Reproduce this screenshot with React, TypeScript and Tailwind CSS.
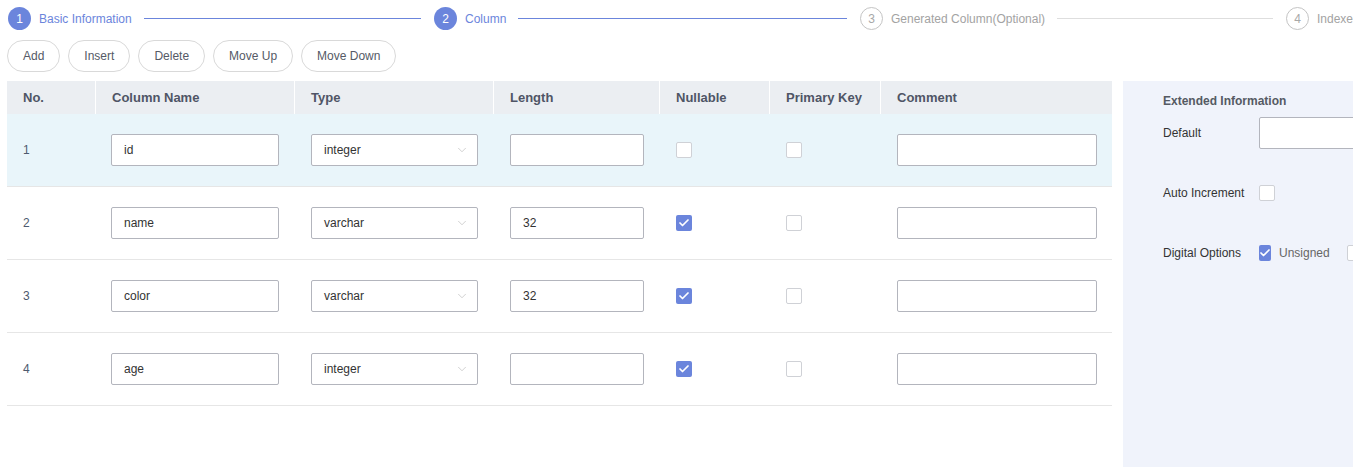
import { Check, ChevronDown } from 'lucide-react';

const steps = [
  { n: 1, label: 'Basic Information', done: true },
  { n: 2, label: 'Column', done: true },
  { n: 3, label: 'Generated Column(Optional)', done: false },
  { n: 4, label: 'Indexes', done: false },
];

const cols = [
  { name: 'No.', w: 'w-[88px]' },
  { name: 'Column Name', w: 'w-[199px]' },
  { name: 'Type', w: 'w-[199px]' },
  { name: 'Length', w: 'w-[166px]' },
  { name: 'Nullable', w: 'w-[110px]' },
  { name: 'Primary Key', w: 'w-[111px]' },
  { name: 'Comment', w: 'w-[232px]' },
];

const rows = [
  { no: 1, name: 'id', type: 'integer', length: '', nullable: false },
  { no: 2, name: 'name', type: 'varchar', length: '32', nullable: true },
  { no: 3, name: 'color', type: 'varchar', length: '32', nullable: true },
  { no: 4, name: 'age', type: 'integer', length: '', nullable: true },
];

function Box({ checked }: { checked: boolean }) {
  return checked ? (
    <div className="w-4 h-4 rounded-[2px] bg-[#6b85dc] flex items-center justify-center">
      <Check size={12} strokeWidth={3.5} className="text-white" />
    </div>
  ) : (
    <div className="w-4 h-4 rounded-[2px] border border-[#cfd1d6] bg-white" />
  );
}

function TextBox({ value, w }: { value: string; w: string }) {
  return (
    <div className={`${w} h-8 border border-[#b3b5bd] rounded-[2px] bg-white px-3 flex items-center text-[12px] text-[#333]`}>
      {value}
    </div>
  );
}

export default function App() {
  return (
    <div className="w-[1353px] h-[467px] overflow-hidden bg-white flex flex-col" style={{ fontFamily: '"Liberation Sans", Arial, sans-serif' }}>
      {/* steps */}
      <div className="h-[37px] flex items-center pl-2 shrink-0">
        {steps.map(s => (
          <div key={s.n} className="w-[426px] shrink-0 flex items-center">
            <div className={`w-[23px] h-[23px] rounded-full flex items-center justify-center text-[12px] shrink-0 ${s.done ? 'bg-[#6b85dc] text-white' : 'border border-[#c4c4c4] text-[#a8a8a8]'}`}>
              {s.n}
            </div>
            <span className={`ml-2 text-[12px] whitespace-nowrap ${s.done ? 'text-[#6b85dc]' : 'text-[#a3a3a3]'}`}>{s.label}</span>
            {s.n < 4 && <div className={`flex-1 h-px ml-3 mr-[13px] ${s.done ? 'bg-[#6b85dc]' : 'bg-[#dedede]'}`} />}
          </div>
        ))}
      </div>

      {/* toolbar */}
      <div className="flex gap-2 pl-[7px] h-8 shrink-0 mt-[3px]">
        {['Add', 'Insert', 'Delete', 'Move Up', 'Move Down'].map(b => (
          <button key={b} className="h-8 px-[15px] rounded-full border border-[#d9d9d9] bg-white text-[12px] text-[#555a66]">
            {b}
          </button>
        ))}
      </div>

      <div className="flex flex-1 mt-[9px] min-h-0">
        {/* table */}
        <div className="ml-[7px] w-[1105px] shrink-0">
          <div className="flex h-[33px] bg-[#ebeef2]">
            {cols.map((c, i) => (
              <div key={c.name} className={`${c.w} shrink-0 pl-4 flex items-center text-[13px] font-bold text-[#4f5566] ${i > 0 ? 'border-l border-white' : ''}`}>
                {c.name}
              </div>
            ))}
          </div>
          {rows.map(r => (
            <div key={r.no} className={`flex h-[73px] border-b border-[#e6e6e6] items-center ${r.no === 1 ? 'bg-[#e9f5fa]' : 'bg-white'}`}>
              <div className="w-[88px] shrink-0 pl-4 text-[12px] text-[#4d5a6e]">{r.no}</div>
              <div className="w-[199px] shrink-0 pl-4">
                <TextBox value={r.name} w="w-[168px]" />
              </div>
              <div className="w-[199px] shrink-0 pl-[17px]">
                <div className="w-[167px] h-8 border border-[#b3b5bd] rounded-[2px] bg-white pl-3 pr-2 flex items-center justify-between text-[12px] text-[#333]">
                  {r.type}
                  <ChevronDown size={14} strokeWidth={1} className="text-[#b0b0b0]" />
                </div>
              </div>
              <div className="w-[166px] shrink-0 pl-[17px]">
                <TextBox value={r.length} w="w-[134px]" />
              </div>
              <div className="w-[110px] shrink-0 pl-[17px]">
                <Box checked={r.nullable} />
              </div>
              <div className="w-[111px] shrink-0 pl-[17px]">
                <Box checked={false} />
              </div>
              <div className="w-[232px] shrink-0 pl-[17px]">
                <TextBox value="" w="w-[200px]" />
              </div>
            </div>
          ))}
        </div>

        {/* extended info */}
        <div className="ml-[11px] flex-1 bg-[#f0f3fb] pl-10 pt-3 overflow-hidden">
          <div className="text-[12px] font-bold text-[#555a63] h-[16px] leading-[16px]">Extended Information</div>
          <div className="flex items-center h-8 mt-[8px]">
            <span className="w-24 shrink-0 text-[12px] text-[#333]">Default</span>
            <div className="w-[200px] h-8 shrink-0 border border-[#b3b5bd] rounded-[2px] bg-white" />
          </div>
          <div className="flex items-center h-8 mt-[28px]">
            <span className="w-24 shrink-0 text-[12px] text-[#333]">Auto Increment</span>
            <Box checked={false} />
          </div>
          <div className="flex items-center h-8 mt-[28px]">
            <span className="w-24 shrink-0 text-[12px] text-[#333]">Digital Options</span>
            <Box checked={true} />
            <span className="ml-2 text-[12px] text-[#666]">Unsigned</span>
            <div className="ml-[17px]">
              <Box checked={false} />
            </div>
            <span className="ml-2 text-[12px] text-[#666] whitespace-nowrap">Zerofill</span>
          </div>
        </div>
      </div>
    </div>
  );
}
